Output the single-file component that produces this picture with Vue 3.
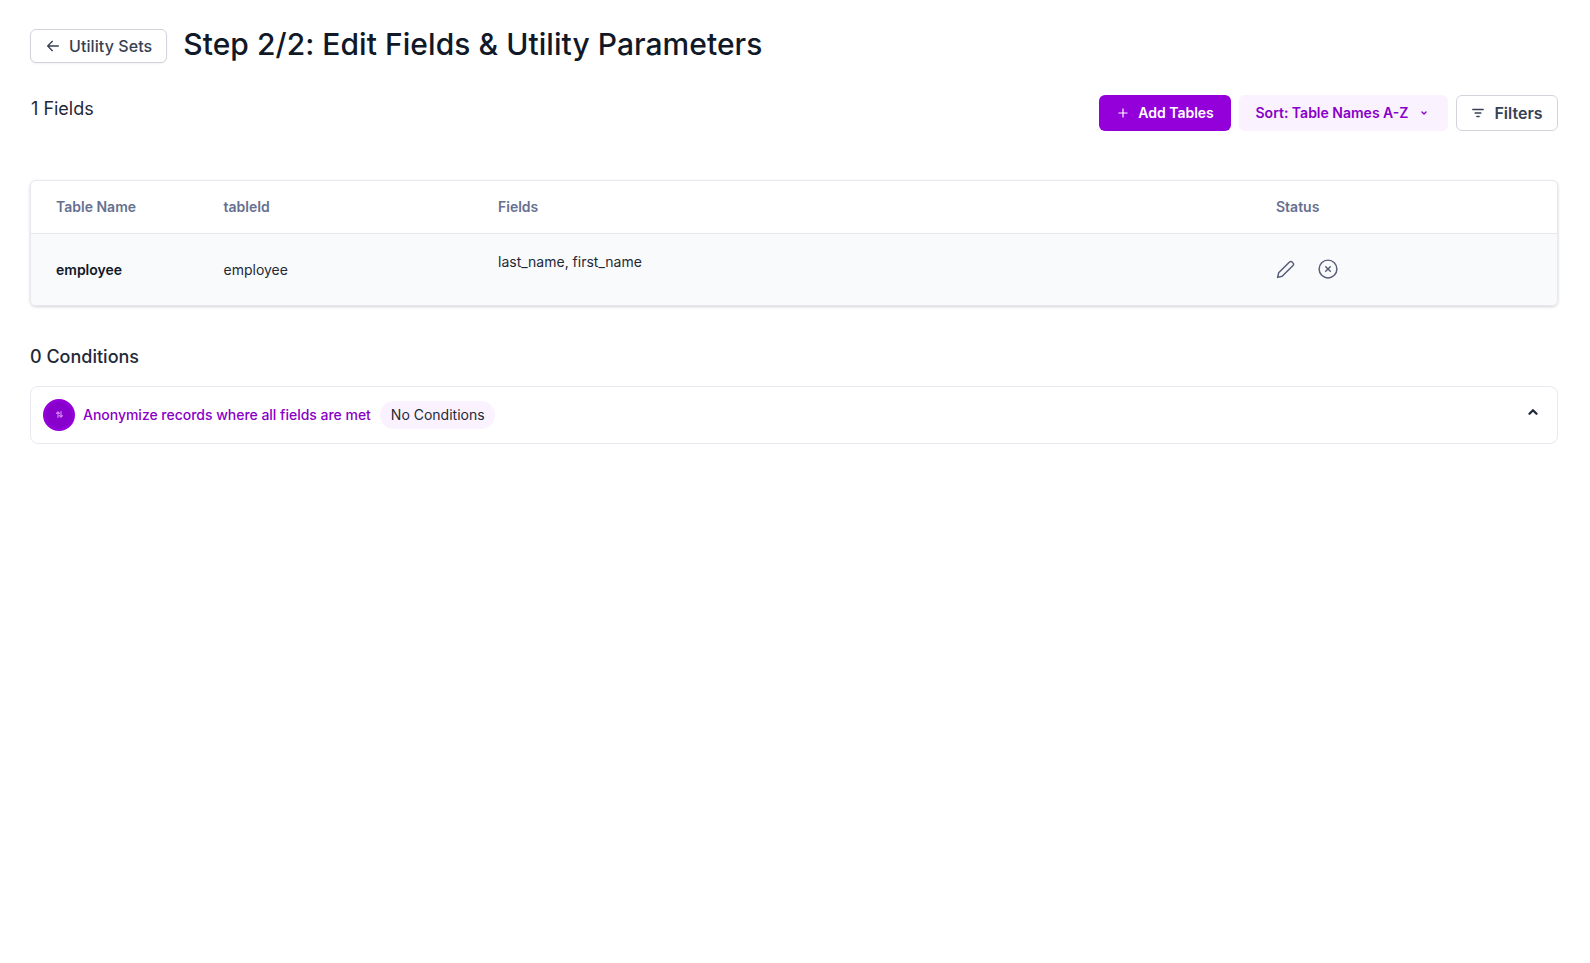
<script setup>
const rows = [{ name: 'employee', id: 'employee', fields: 'last_name, first_name' }];
</script>

<template>
  <div class="page">
    <div class="title-row">
      <button class="back-btn">
        <svg width="16" height="16" viewBox="0 0 24 24" fill="none" stroke="currentColor" stroke-width="2" stroke-linecap="round" stroke-linejoin="round"><path d="M20 12H5M11 5l-7 7 7 7" /></svg>
        Utility Sets
      </button>
      <h1>Step 2/2: Edit Fields &amp; Utility Parameters</h1>
    </div>

    <div class="toolbar">
      <div class="count">1 Fields</div>
      <div class="actions">
        <button class="btn btn-primary">
          <svg width="14" height="14" viewBox="0 0 24 24" fill="none" stroke="currentColor" stroke-width="2" stroke-linecap="round"><path d="M12 5v14M5 12h14" /></svg>
          Add Tables
        </button>
        <button class="btn btn-soft">
          Sort: Table Names A-Z
          <svg width="8" height="8" viewBox="0 0 24 24" fill="none" stroke="currentColor" stroke-width="4" stroke-linecap="round" stroke-linejoin="round"><path d="M6 9l6 6 6-6" /></svg>
        </button>
        <button class="btn btn-outline">
          <svg width="14" height="14" viewBox="0 0 24 24" fill="none" stroke="currentColor" stroke-width="2.2" stroke-linecap="round"><path d="M3 6h18M7 12h10M10 18h4" /></svg>
          Filters
        </button>
      </div>
    </div>

    <div class="table-card">
      <div class="t-row t-head">
        <div>Table Name</div>
        <div>tableId</div>
        <div>Fields</div>
        <div>Status</div>
      </div>
      <div class="t-row t-body" v-for="row in rows" :key="row.id">
        <div class="name">{{ row.name }}</div>
        <div>{{ row.id }}</div>
        <div class="fields">{{ row.fields }}</div>
        <div class="status">
          <svg class="pencil" width="21" height="21" viewBox="0 0 24 24" fill="none" stroke="currentColor" stroke-width="1.7" stroke-linecap="round" stroke-linejoin="round"><path d="M3 21l1.2-5.2L16.6 3.4a2 2 0 0 1 2.9 0l1.1 1.1a2 2 0 0 1 0 2.9L8.2 19.8 3 21z" /></svg>
          <svg width="22" height="22" viewBox="0 0 24 24" fill="none" stroke="currentColor" stroke-width="1.6" stroke-linecap="round"><circle cx="12" cy="12" r="9.7" /><path d="M9.5 9.5l5 5M14.5 9.5l-5 5" /></svg>
        </div>
      </div>
    </div>

    <h2>0 Conditions</h2>

    <div class="conditions">
      <span class="circle">
        <svg width="9" height="9" viewBox="0 0 24 24" fill="none" stroke="currentColor" stroke-width="3" stroke-linecap="round" stroke-linejoin="round"><path d="M8 20V5M4 9l4-4 4 4M16 4v15M12 15l4 4 4-4" /></svg>
      </span>
      <span class="cond-text">Anonymize records where all fields are met</span>
      <span class="pill">No Conditions</span>
      <svg class="chevron" width="14" height="14" viewBox="0 0 24 24" fill="none" stroke="currentColor" stroke-width="4" stroke-linecap="round" stroke-linejoin="round"><path d="M6 15l6-6 6 6" /></svg>
    </div>
  </div>
</template>

<style scoped>
.page {
  padding: 24px 32px 0 30px;
  font-family: Inter, "Liberation Sans", sans-serif;
  color: #111827;
}

.title-row {
  display: flex;
  align-items: center;
  gap: 16px;
  height: 40px;
}

.back-btn {
  display: flex;
  align-items: center;
  gap: 8px;
  height: 34px;
  margin-top: 4px;
  padding: 0 14px;
  background: #fff;
  border: 1px solid #d1d5db;
  border-radius: 6px;
  box-shadow: 0 1px 2px rgba(0, 0, 0, 0.05);
  color: #374151;
  font: 500 16px Inter, sans-serif;
  letter-spacing: 0.08px;
}

h1 {
  margin: 0;
  font-size: 30px;
  font-weight: 500;
  line-height: 40px;
  letter-spacing: 0.05px;
}

.toolbar {
  display: flex;
  justify-content: space-between;
  align-items: flex-start;
  margin-top: 31px;
}

.count {
  padding-left: 1px;
  font-size: 18px;
  line-height: 28px;
  color: #1f2937;
}

.actions {
  display: flex;
  gap: 8px;
}

.btn {
  display: flex;
  align-items: center;
  height: 36px;
  border-radius: 6px;
  font: 600 14px Inter, sans-serif;
}

.btn-primary {
  gap: 8px;
  width: 132px;
  justify-content: center;
  padding-bottom: 2px;
  background: #9400d9;
  border: none;
  color: #fff;
}

.btn-soft {
  gap: 12px;
  width: 209px;
  padding: 0 0 1px 16.5px;
  background: #faf2ff;
  border: none;
  color: #8800c7;
}

.btn-outline {
  gap: 9px;
  width: 102px;
  justify-content: center;
  background: #fff;
  border: 1px solid #d1d5db;
  color: #374151;
  font-size: 16px;
}

.table-card {
  margin-top: 49px;
  border-radius: 6px;
  overflow: hidden;
  border: 1px solid #e8e9ef;
  box-shadow: 0 1px 3px rgba(0, 0, 0, 0.18);
  font-size: 14px;
}

.t-row {
  display: grid;
  grid-template-columns: 167.5px 274.5px 778px 1fr;
  padding-left: 25px;
}

.t-head {
  align-items: center;
  height: 50px;
  padding-bottom: 2px;
  border-bottom: 1px solid #e5e7eb;
  color: #667090;
  font-weight: 600;
}

.t-body {
  align-items: center;
  height: 71px;
  background: #f9fafb;
  color: #1f2937;
}

.name {
  font-weight: 600;
  color: #111827;
}

.fields {
  align-self: flex-start;
  padding-top: 19px;
}

.status {
  display: flex;
  align-items: center;
  gap: 21px;
  margin-left: -1px;
  padding-bottom: 2px;
  color: #565d78;
}

.pencil {
  margin-top: 2px;
}

h2 {
  margin: 37px 0 0;
  font-size: 18px;
  font-weight: 500;
  line-height: 28px;
  color: #1f2937;
}

.conditions {
  display: flex;
  align-items: center;
  margin-top: 15px;
  height: 55px;
  padding: 0 12px 1px;
  border: 1px solid #e8e9ef;
  border-radius: 8px;
  font-size: 14px;
}

.circle {
  display: flex;
  align-items: center;
  justify-content: center;
  box-sizing: border-box;
  width: 32px;
  height: 32px;
  border: 3px solid #9400d9;
  border-radius: 50%;
  background: #8800cc;
  color: #d58cf5;
}

.cond-text {
  margin-left: 8px;
  color: #8800c7;
  font-weight: 500;
  letter-spacing: -0.02px;
}

.pill {
  margin-left: 9px;
  padding: 0 10.5px 0 11px;
  line-height: 28px;
  border-radius: 14px;
  background: #faf2ff;
  color: #1f2937;
}

.chevron {
  margin-left: auto;
  margin-right: 5px;
  margin-bottom: 6px;
  color: #1f2937;
}
</style>
